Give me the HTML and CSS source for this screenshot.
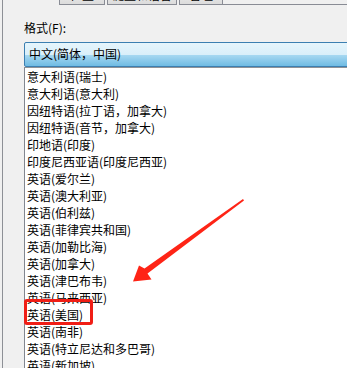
FILE: index.html
```html
<!DOCTYPE html>
<html lang="zh-CN">
<head>
	<meta charset="utf-8">
	<title>区域和语言</title>
	<link rel="stylesheet" href="styles.css">
</head>
<body>
<div class="window">
	<div class="frame">
		<div class="tabs">
			<div class="tab t1">位置</div>
			<div class="tab t2">键盘和语言</div>
			<div class="tab t3">管理</div>
			<div class="rest"></div>
		</div>
		<div class="page">
			<div class="label">格式(F):</div>
			<div class="combo">中文(简体，中国)</div>
			<ul class="list">
				<li>意大利语(瑞士)</li>
				<li>意大利语(意大利)</li>
				<li>因纽特语(拉丁语，加拿大)</li>
				<li>因纽特语(音节，加拿大)</li>
				<li>印地语(印度)</li>
				<li>印度尼西亚语(印度尼西亚)</li>
				<li>英语(爱尔兰)</li>
				<li>英语(澳大利亚)</li>
				<li>英语(伯利兹)</li>
				<li>英语(菲律宾共和国)</li>
				<li>英语(加勒比海)</li>
				<li>英语(加拿大)</li>
				<li>英语(津巴布韦)</li>
				<li>英语(马来西亚)</li>
				<li>英语(美国)</li>
				<li>英语(南非)</li>
				<li>英语(特立尼达和多巴哥)</li>
				<li>英语(新加坡)</li>
			</ul>
		</div>
	</div>
	<!-- red marks drawn over the screenshot -->
	<div class="mark"></div>
	<svg class="arrow" width="347" height="368" viewBox="0 0 347 368">
		<polygon points="243,199 144.5,268.5 139,265.5 133,281.5 151.5,279.5 147.5,273.5 244,200.5" fill="#fe2416"/>
	</svg>
</div>
</body>
</html>
```

FILE: styles.css
```css
body {margin:0; padding:0; background:#f0f0f0; font:normal 12px/17px "Noto Sans CJK SC", "Noto Sans", sans-serif; color:#000; overflow:hidden;}
.window {position:relative; width:347px; height:368px; overflow:hidden;}
.frame {margin-left:2px; height:368px; border-left:1px solid #8d9096;}

.tabs {display:flex; align-items:flex-end; height:5px; overflow:hidden; padding-left:56px;}
.tab {
    height:20px;
    line-height:18px;
    box-sizing:border-box;
    border:1px solid #898c95;
    background:linear-gradient(#f2f2f2, #dcdcdc);
    text-align:center;
    margin-right:2px;
}
.t1 {width:46px;}
.t2 {width:70px;}
.t3 {width:44px; margin-right:0;}
.rest {flex:1; height:1px; background:#898c95;}

.page {padding:17px 0 0 21px;}
.label {line-height:12px; height:12px; margin-bottom:8px;}
.combo {
    height:23px;
    line-height:22px;
    margin-right:-10px;
    padding-left:4px;
    border:1px solid #3c7fb1;
    border-radius:2px;
    background:linear-gradient(#e6f5fc 0%, #d9effa 50%, #a8d9f2 51%, #6fbbe3 100%);
}
.list {
    list-style:none;
    margin:0 -10px 0 0;
    padding:0;
    background:#fff;
    border-left:1px solid #828790;
    border-top:1px solid #8f9296;
}
.list li {height:17px; line-height:17px; padding-left:2px; white-space:nowrap;}

.mark {
    position:absolute;
    left:24px;
    top:299px;
    width:63px;
    height:20px;
    border:3px solid #f01e16;
    border-radius:3px;
}
.arrow {position:absolute; left:0; top:0; pointer-events:none;}
```
